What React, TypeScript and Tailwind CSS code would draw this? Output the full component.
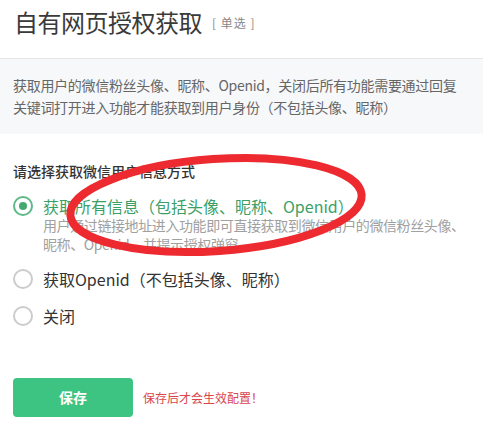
import { useState } from 'react'

const options = [
  {
    key: 'all',
    label: '获取所有信息（包括头像、昵称、Openid）',
    desc: '用户通过链接地址进入功能即可直接获取到微信用户的微信粉丝头像、昵称、Openid，并提示授权弹窗',
  },
  { key: 'openid', label: '获取Openid（不包括头像、昵称）' },
  { key: 'off', label: '关闭' },
]

function Radio({ checked }: { checked: boolean }) {
  return (
    <span
      className={`flex h-[20px] w-[20px] shrink-0 items-center justify-center rounded-full border-2 bg-white ${
        checked ? 'border-[#5dba87]' : 'border-[#cccccc]'
      }`}
    >
      {checked && <span className="h-[8px] w-[8px] rounded-full bg-[#44a86f]" />}
    </span>
  )
}

export default function App() {
  const [value, setValue] = useState('all')

  return (
    <div
      className="relative h-[428px] w-[483px] overflow-hidden bg-white text-[#333]"
      style={{ fontFamily: '"Noto Sans CJK SC", "Noto Sans", sans-serif' }}
    >
      <div className="flex h-[58px] items-start gap-[10px] px-[14px] pt-[10px]">
        <h1 className="text-[24px] font-normal leading-none tracking-[-0.5px] text-[#3a3a3a]">自有网页授权获取</h1>
        <span className="mt-[7px] text-[12px] leading-none tracking-[1px] text-[#888]">[ 单选 ]</span>
      </div>

      <div className="border-t border-[#e6e6e6] bg-[#f7f8fa] px-[13px] pb-[16px] pt-[15px] text-[14px] leading-[22px] tracking-[-0.3px] text-[#666]">
        获取用户的微信粉丝头像、昵称、Openid，关闭后所有功能需要通过回复关键词打开进入功能才能获取到用户身份（不包括头像、昵称）
      </div>

      <div className="px-[13px] pt-[26px]">
        <div className="text-[14px] font-medium leading-[22px] text-[#333]">请选择获取微信用户信息方式</div>

        <div className="mt-[12px] flex flex-col gap-[13px]">
          {options.map((o) => (
            <label key={o.key} className="flex cursor-pointer items-start gap-[10px]" onClick={() => setValue(o.key)}>
              <span className="pt-[2px]">
                <Radio checked={value === o.key} />
              </span>
              <span className="flex flex-col">
                <span
                  className={`text-[16px] leading-[24px] ${value === o.key ? 'text-[#3b9f66]' : 'text-[#333]'}`}
                >
                  {o.label}
                </span>
                {o.desc && (
                  <span className="mt-[-2px] text-[14px] leading-[19px] tracking-[-0.4px] text-[#a0a0a0]">{o.desc}</span>
                )}
              </span>
            </label>
          ))}
        </div>

        <div className="mt-[50px] flex items-center gap-[10px]">
          <button className="h-[39px] w-[120px] rounded-[4px] bg-[#3dc483] text-[14px] font-bold text-white">保存</button>
          <span className="text-[12px] text-[#d9464c]">保存后才会生效配置！</span>
        </div>
      </div>

      <svg className="pointer-events-none absolute left-0 top-0" width="483" height="428">
        <ellipse
          cx="216"
          cy="205"
          rx="146"
          ry="46"
          fill="none"
          stroke="#ec2a30"
          strokeWidth="8"
          transform="rotate(-4 216 205)"
        />
      </svg>
    </div>
  )
}
